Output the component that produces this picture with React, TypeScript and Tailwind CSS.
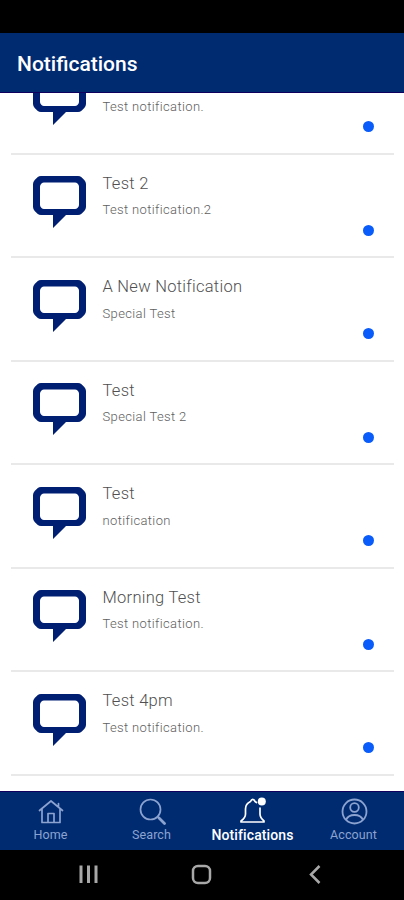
type Notification = {
  id: number;
  title?: string;
  body: string;
};

type Tab = {
  label: string;
  icon: React.ReactNode;
  active?: boolean;
};

const notifications: Notification[] = [
  { id: 1, body: "Test notification." },
  { id: 2, title: "Test 2", body: "Test notification.2" },
  { id: 3, title: "A New Notification", body: "Special Test" },
  { id: 4, title: "Test", body: "Special Test 2" },
  { id: 5, title: "Test", body: "notification" },
  { id: 6, title: "Morning Test", body: "Test notification." },
  { id: 7, title: "Test 4pm", body: "Test notification." },
];

function MessageIcon() {
  return (
    <svg viewBox="0 0 53 52" className="h-[52px] w-[53px] shrink-0" fill="#001f73">
      <path
        fillRule="evenodd"
        d="M8 0H45Q47 0 48.500 1.200L51.300 4Q53 6 53 8V31Q53 33 51.300 35L48.500 37.800Q47 39 45 39H33L20 52V39H8Q6 39 4.500 37.800L1.700 35Q0 33 0 31V8Q0 6 1.700 4L4.500 1.200Q6 0 8 0ZM11 6.500Q9.500 6.500 8.500 7.500Q7 9 7 10.500V29Q7 30.500 8.500 32Q9.500 33 11 33H42Q43.500 33 44.500 32Q46 30.500 46 29V10.500Q46 9 44.500 7.500Q43.500 6.500 42 6.500Z"
      />
    </svg>
  );
}

function HomeIcon() {
  return (
    <svg viewBox="0 0 28 28" className="size-7" fill="none" stroke="currentColor" strokeWidth="1.7" strokeLinejoin="round" strokeLinecap="round">
      <path d="M2.500 13.500 14 4l11.500 9.500M5 11.700V25.500h18V11.700M21.500 10V6.500M11 25.500v-9h6v9" />
    </svg>
  );
}

function SearchIcon() {
  return (
    <svg viewBox="0 0 28 28" className="size-7" fill="none" stroke="currentColor" strokeWidth="1.7" strokeLinecap="round">
      <circle cx="12.500" cy="12.500" r="10" />
      <path d="m19.700 19.700 1.300 1.300" />
      <path d="m21 21 5.500 5.500" strokeWidth="2.800" />
    </svg>
  );
}

function BellIcon() {
  return (
    <svg viewBox="0 0 28 28" className="size-7" fill="none" stroke="currentColor" strokeWidth="1.7" strokeLinejoin="round" strokeLinecap="round">
      <path d="M17.500 5.500 16 4.500C15.500 3 15 2.300 13.800 2.300s-1.700.7-2.300 2.200C8 6 6.500 8.500 6.500 12v5c0 3-1 4.500-4.500 7v1h23v-1c-3-2.500-4-4-4-7v-6" />
      <circle cx="22.800" cy="4.500" r="4" fill="currentColor" stroke="none" />
    </svg>
  );
}

function AccountIcon() {
  return (
    <svg viewBox="0 0 28 28" className="size-7" fill="none" stroke="currentColor" strokeWidth="1.8">
      <circle cx="14.500" cy="14.500" r="12" />
      <circle cx="14.500" cy="10.500" r="4.300" />
      <path d="M6 23c1.500-3.500 4.500-5 8.500-5s7 1.500 8.500 5" />
    </svg>
  );
}

const tabs: Tab[] = [
  { label: "Home", icon: <HomeIcon /> },
  { label: "Search", icon: <SearchIcon /> },
  { label: "Notifications", icon: <BellIcon />, active: true },
  { label: "Account", icon: <AccountIcon /> },
];

function NotificationRow({ item }: { item: Notification }) {
  return (
    <li className="flex h-[103.5px] shrink-0 border-b-2 border-[#e9e9e9] pt-[21.5px] pr-5 pl-[22px]">
      <MessageIcon />
      <div className="-mt-[2.2px] ml-[16.5px] flex-1">
        <h2 className="h-5 text-[16.5px] leading-5 font-light tracking-[0.27px] text-[#505050]">{item.title}</h2>
        <p className="mt-[8.5px] text-[13px] leading-4 font-light tracking-[0.36px] text-[#606060]">{item.body}</p>
      </div>
      <span className="mb-[20.5px] size-[11px] self-end rounded-full bg-[#0a5cfa]" />
    </li>
  );
}

export default function App() {
  return (
    <div className="flex h-[900px] w-[404px] flex-col overflow-hidden bg-white font-['Roboto',sans-serif]">
      <div className="h-[33px] shrink-0 bg-black" />
      <header className="flex h-[60px] shrink-0 items-center border-b border-[#10005e] bg-[#002b71] px-[17px] pt-1">
        <h1 className="text-[21px] font-medium text-white">Notifications</h1>
      </header>

      <main className="flex min-h-0 flex-1 flex-col overflow-hidden">
        <ul className="flex h-full flex-col justify-end pr-[10px] pb-[15.5px] pl-[11px]">
          {notifications.map((item) => (
            <NotificationRow key={item.id} item={item} />
          ))}
        </ul>
      </main>

      <nav className="grid h-[59px] shrink-0 grid-cols-4 border-t border-[#10005e] bg-[#002b71]">
        {tabs.map((tab) => (
          <button
            key={tab.label}
            type="button"
            className={
              tab.active
                ? "flex flex-col items-center pt-[5px] text-[14px] font-medium tracking-[0.1px] text-white"
                : "flex flex-col items-center pt-[5px] text-[12.5px] tracking-[0.1px] text-[#8ca3d0]"
            }
          >
            {tab.icon}
            <span className="mt-0.5 leading-4">{tab.label}</span>
          </button>
        ))}
      </nav>

      <div className="flex h-[50px] shrink-0 items-center bg-black text-[#a8a8a8]">
        <svg viewBox="0 0 404 50" className="h-[50px] w-full" fill="none" stroke="currentColor">
          <path d="M81 15.500v17.500M88.500 15.500v17.500M96 15.500v17.500" strokeWidth="3" />
          <rect x="193" y="16" width="17" height="17" rx="5" strokeWidth="2.500" />
          <path d="m319.500 16-8.500 8.500 8.500 8.500" strokeWidth="2.500" />
        </svg>
      </div>
    </div>
  );
}
